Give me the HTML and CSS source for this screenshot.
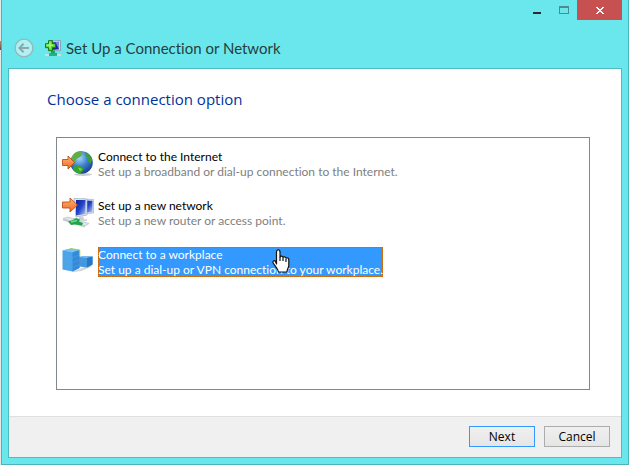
FILE: index.html
```
<!DOCTYPE html>
<html lang="en">
<head>
  <meta charset="UTF-8">
  <title>Set Up a Connection or Network</title>
  <meta name="viewport" content="width=device-width, initial-scale=1.0">
  <link rel="stylesheet" href="styles.css">
</head>
<body>
  <div class="window">
    <div class="caption">
      <button class="cap-btn" aria-label="Minimize">
        <svg width="10" height="10" shape-rendering="crispEdges"><path d="M1 7h8v2H1z" fill="#2a2a2a"/></svg>
      </button>
      <button class="cap-btn" aria-label="Maximize">
        <svg width="10" height="8" shape-rendering="crispEdges"><path d="M0 0h10v8H0zM1 2v5h8V2z" fill="#4a8c90" fill-rule="evenodd"/></svg>
      </button>
      <button class="cap-btn close" aria-label="Close">
        <svg width="8" height="7" shape-rendering="crispEdges"><path d="M0 0h2v1h1v1h2V1h1V0h2v1H7v1H6v1H5v1h1v1h1v1h1v1H6V6H5V5H3v1H2v1H0V6h1V5h1V4h1V3H2V2H1V1H0z" fill="#fff"/></svg>
      </button>
    </div>

    <div class="header">
      <button class="back" aria-label="Back" disabled>
        <svg width="20" height="20" viewBox="0 0 20 20">
          <circle cx="10" cy="10" r="8.9" fill="#b0eff2" stroke="#8fb9bb" stroke-width="1.3"/>
          <path d="M15 10H6M9.6 5.8 5.4 10l4.2 4.2" fill="none" stroke="#8aa9ab" stroke-width="2"/>
        </svg>
      </button>
      <svg class="net-icon" width="16" height="17" viewBox="0 0 16 17">
        <path d="M5 1 15.500.5v10L6 11z" fill="#d5dde6" stroke="#8195a8" stroke-width=".8"/>
        <path d="m7 2.500 7-.7v7.400l-7 .8z" fill="#2024a8"/>
        <path d="m10.500 2.200 3.500-.4v7.400z" fill="#7b88e0"/>
        <path d="M6 10.500h4V13h2v2H4.500v-2H6z" fill="#17a56b"/>
        <path d="M0 14h16v2H0z" fill="#d3dcd8"/>
        <path d="M4 13.500h8v2.500H4z" fill="#22b478"/>
        <path d="M3.500.7h4v3h3v4h-3v3h-4v-3h-3v-4h3z" fill="#5bd63a" stroke="#127a12" stroke-width="1"/>
        <path d="M5 1.500v7M1.500 5.200h7" stroke="#b4f58f" stroke-width="1.200"/>
      </svg>
      <span class="title">Set Up a Connection or Network</span>
    </div>

    <div class="panel">
      <div class="content">
        <h1>Choose a connection option</h1>
        <ul class="options">
          <li>
            <button class="option">
              <svg width="32" height="32" viewBox="0 0 32 32">
                <defs>
                  <radialGradient id="sea" cx=".4" cy=".3" r=".75">
                    <stop offset="0" stop-color="#a8dcf8"/>
                    <stop offset=".5" stop-color="#3f7fd0"/>
                    <stop offset="1" stop-color="#123a86"/>
                  </radialGradient>
                  <linearGradient id="arrow" x1="0" y1="0" x2="0" y2="1">
                    <stop offset="0" stop-color="#ffb27a"/>
                    <stop offset="1" stop-color="#f06a1e"/>
                  </linearGradient>
                </defs>
                <ellipse cx="21" cy="26.500" rx="9" ry="1.500" fill="#c9ccd0"/>
                <circle cx="19.500" cy="14.500" r="11.300" fill="url(#sea)"/>
                <path d="M11 7c2-3 6-4.500 10-3.800l-2 2 1.500 1.500-3.500 3-2.500 1-2 4-2-2-1.500-2z" fill="#5fae46"/>
                <path d="M24 4.500c3 1.500 5.500 4.500 6.300 7.500l-2 4-2.500-3 .5-3-2.800-2z" fill="#3fa12c"/>
                <path d="M12 18.500c3-1.500 7-1 10 2.500l-1.500 2.500-3 2.200c-3-.5-6-2.700-6.500-5z" fill="#35a52c"/>
                <path d="m16 19.500 4 1.500-2 2z" fill="#8bd66a"/>
                <path d="M.5 11.500H6V8l6.500 6.500L6 21v-3.500H.5z" fill="url(#arrow)" stroke="#b9501a" stroke-width=".9"/>
              </svg>
              <span class="text">
                <span class="name">Connect to the Internet</span>
                <span class="desc">Set up a broadband or dial-up connection to the Internet.</span>
              </span>
            </button>
          </li>
          <li>
            <button class="option">
              <svg width="32" height="32" viewBox="0 0 32 32">
                <defs>
                  <linearGradient id="screen" x1="0" y1="0" x2="1" y2="1">
                    <stop offset="0" stop-color="#0c1f9c"/>
                    <stop offset=".5" stop-color="#2445c8"/>
                    <stop offset="1" stop-color="#b9ccf8"/>
                  </linearGradient>
                </defs>
                <path d="m20 2 11.500.5V16L21 17z" fill="#dfe5ee" stroke="#a4b0c0" stroke-width=".7"/>
                <path d="m22 3.500 8.500.2V15L22 15.500z" fill="url(#screen)"/>
                <path d="M12 1.500 25 2v16l-11 2z" fill="#e5e9f0" stroke="#9aa6b8" stroke-width=".7"/>
                <path d="M14 3h9.500v14L14 18.500z" fill="url(#screen)"/>
                <path d="M17 19.500h4l1 2.500-5 1zM11 21l14 1.500V24l-14-1z" fill="#c7ced6"/>
                <path d="m1 21.500 5-1.500 21 6.500-4 2.500z" fill="#e1e5e8" stroke="#b6bdc2" stroke-width=".7"/>
                <path d="m1 21.500 22 7.500v1.500L1 23.500z" fill="#c5cbd0"/>
                <path d="m6 24.500 5-1.500 3-2 4 1.500-1 2 4 1.500-1 2.500-7-1-4 .5z" fill="#1fa54b"/>
                <path d="m9 25 6-1.500" stroke="#70dc8c" stroke-width="1.300"/>
                <path d="M.5 5H8V1l7.500 7L8 15v-4H.5z" fill="url(#arrow)" stroke="#b9501a" stroke-width=".9"/>
              </svg>
              <span class="text">
                <span class="name">Set up a new network</span>
                <span class="desc">Set up a new router or access point.</span>
              </span>
            </button>
          </li>
          <li>
            <button class="option selected">
              <svg width="32" height="32" viewBox="0 0 32 32">
                <path d="m9 26 9-3 13-6-2 4-10 4-7 1z" fill="#d0d4d8"/>
                <path d="m17 11 5-1 8.500.5v8L25 21.500l-8-1z" fill="#4298de"/>
                <path d="m17 11 5-1 8.500.5-5.500 1.500z" fill="#7dbcf0"/>
                <path d="m25 12 5.500-1.500v8L25 21.500z" fill="#2678c6"/>
                <path d="M.5 4.500 8.500 2.500 17.500 4v18L10.500 25.500.5 23.500z" fill="#4ba3e8"/>
                <path d="m.5 4.500 8-2 9 1.500-7 2.500z" fill="#79c0f4"/>
                <path d="m10.500 6.500 7-2.500v18l-7 3.500z" fill="#3489d8"/>
                <path d="m8.500 2.500 9.300 1.500v6" fill="none" stroke="#a4dc30" stroke-width="1"/>
                <path d="m1 10 9.500 1.500 7-2.500M1 15l9.500 1.500 7-2.500M1 20l9.500 1.500 7-3M5.500 6v18" fill="none" stroke="#5aaaea" stroke-width=".4"/>
              </svg>
              <span class="text">
                <span class="name">Connect to a workplace</span>
                <span class="desc">Set up a dial-up or VPN connection to your workplace.</span>
                <svg class="pointer" width="18" height="24" viewBox="0 0 18 24">
                  <path d="M4.500 15V3c0-3 3.500-3 3.500 0v5c.5-1.500 3-1.200 3 .5.600-1.200 2.800-.8 3 .7 1-.8 2.800-.2 2.800 1.500v5.800c0 2-1.800 3.500-1.800 6.500H6.500C6 20 3 17 1.200 14c-1-2 1-3 2.300-1.500z" fill="#fff" stroke="#111" stroke-width="1.200" stroke-linejoin="round"/>
                  <path d="M8 8v4M11 9v3M14 10v3" stroke="#111" stroke-width="1.200"/>
                </svg>
              </span>
            </button>
          </li>
        </ul>
      </div>
      <div class="footer">
        <button class="btn default">Next</button>
        <button class="btn">Cancel</button>
      </div>
    </div>
  </div>
</body>
</html>
```
FILE: styles.css
```
* { box-sizing: border-box; }
body { margin: 0; padding-left: 1px; background: #e4e8e8; color: #000; font-family: Lato, "Open Sans", sans-serif; font-size: 12px; line-height: 15px; font-variant-ligatures: none; }
button { font: inherit; color: inherit; margin: 0; padding: 0; border: none; background: none; font-variant-ligatures: none; }
svg { display: block; flex: none; }
h1, ul { margin: 0; padding: 0; font-weight: normal; }

/* desktop icon edge showing behind the window */
body { background: linear-gradient(#c98a4a, #5a4a60) 0 41px / 1px 9px no-repeat #e4e8e8; }

.window { min-height: 100vh; display: flex; flex-direction: column; padding: 0 6px 6px; background: #6ae7ec; border: 1px solid #4bb3b9; border-top: none; }

.caption { display: flex; justify-content: flex-end; height: 20px; }
.cap-btn { width: 27px; display: flex; align-items: center; justify-content: center; }
.cap-btn.close { width: 45px; background: #c75050; }

.header { display: flex; align-items: center; height: 48px; padding: 8px 6px 0; }
.net-icon { margin-left: 11px; }
.title { margin-left: 5px; font-size: 15px; line-height: 20px; color: #263e40; }

.panel { flex: 1; display: flex; flex-direction: column; background: #fff; border: 1px solid #4fbcc2; }
.content { flex: 1; display: flex; flex-direction: column; padding: 20px 31px 26px 38px; }
h1 { font-family: "Open Sans", sans-serif; font-size: 15px; line-height: 20px; color: #003399; }
.options { flex: 1; margin: 28px 0 0 9px; padding: 10px 5px; list-style: none; border: 1px solid #828790; }
.options li { height: 49px; }
.option { display: flex; align-items: flex-start; gap: 4px; text-align: left; }
.text { display: block; position: relative; margin-top: 1px; white-space: nowrap; }
.name, .desc { display: block; }
.desc { color: #808080; }
.selected .text { background: #3399ff; color: #fff; outline: 1px dotted #cc6600; outline-offset: -1px; }
.selected .desc { color: #fff; }
.pointer { position: absolute; left: 174px; top: 2px; }

.footer { display: flex; justify-content: flex-end; gap: 9px; padding: 9px 11px 10px; background: #f0f0f0; border-top: 1px solid #dfdfdf; }
.btn { width: 66px; height: 21px; font-family: "Open Sans", sans-serif; border: 1px solid #acacac; background: linear-gradient(#f0f0f0, #e5e5e5); }
.btn.default { border-color: #3399ff; }
```
